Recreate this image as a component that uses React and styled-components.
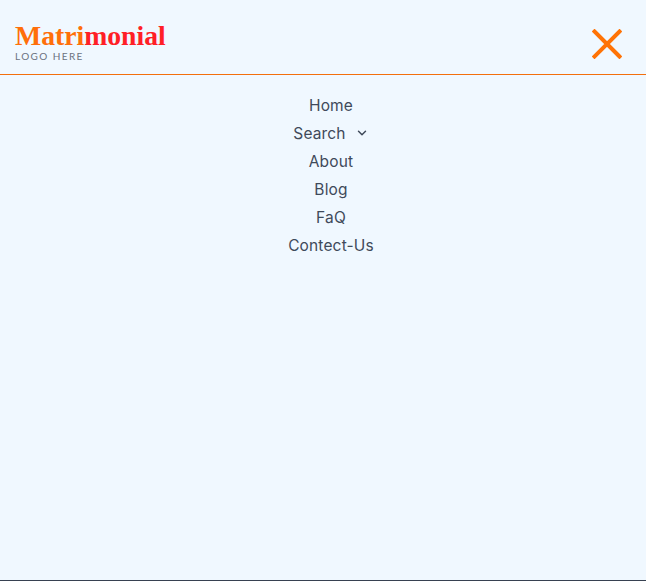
import React from "react";
import styled, { createGlobalStyle } from "styled-components";
import { ChevronDown } from "lucide-react";

const Global = createGlobalStyle`
  html, body {
    margin: 0;
    padding: 0;
    background: #f0f8ff;
  }
`;

const Page = styled.div`
  height: 581px;
  box-sizing: border-box;
  background: #f0f8ff;
  border-bottom: 1px solid #374151;
  display: flex;
  flex-direction: column;
`;

const Header = styled.header`
  height: 75px;
  box-sizing: border-box;
  border-bottom: 1px solid #f36f0d;
  padding: 10px 24px 0 15px;
  display: flex;
  align-items: center;
  justify-content: space-between;
`;

const Logo = styled.div`
  display: flex;
  flex-direction: column;
`;

const Brand = styled.div`
  font-family: "Liberation Serif", serif;
  font-weight: 700;
  font-size: 27.7px;
  line-height: 28px;
  color: #ff1f26;
  span {
    color: #ff6f0a;
  }
`;

const Tagline = styled.div`
  font-family: Lato, sans-serif;
  font-size: 10px;
  line-height: 12px;
  letter-spacing: 1.4px;
  color: #6b7280;
`;

const CloseButton = styled.button`
  border: 0;
  padding: 0;
  margin-top: 3px;
  background: none;
  display: flex;
  color: #ff7306;
`;

const Nav = styled.nav`
  padding: 16px 0 0 16px;
  display: flex;
  flex-direction: column;
  align-items: center;
`;

const NavItem = styled.div`
  height: 28px;
  display: flex;
  align-items: center;
  gap: 9px;
  font-family: Inter, sans-serif;
  font-size: 15.5px;
  letter-spacing: 0.15px;
  color: #3f4a5a;
`;

const links = ["About", "Blog", "FaQ", "Contect-Us"];

export default function App() {
  return (
    <Page>
      <Global />
      <Header>
        <Logo>
          <Brand>
            <span>Matri</span>monial
          </Brand>
          <Tagline>LOGO HERE</Tagline>
        </Logo>
        <CloseButton aria-label="Close">
          <svg width="30" height="30" viewBox="0 0 30 30" fill="none">
            <path d="M2.5 2.5 L27.5 27.5 M27.5 2.5 L2.5 27.5" stroke="currentColor" strokeWidth="4" strokeLinecap="square" />
          </svg>
        </CloseButton>
      </Header>
      <Nav>
        <NavItem>Home</NavItem>
        <NavItem>
          Search
          <ChevronDown size={14} strokeWidth={2.5} />
        </NavItem>
        {links.map((link) => (
          <NavItem key={link}>{link}</NavItem>
        ))}
      </Nav>
    </Page>
  );
}
